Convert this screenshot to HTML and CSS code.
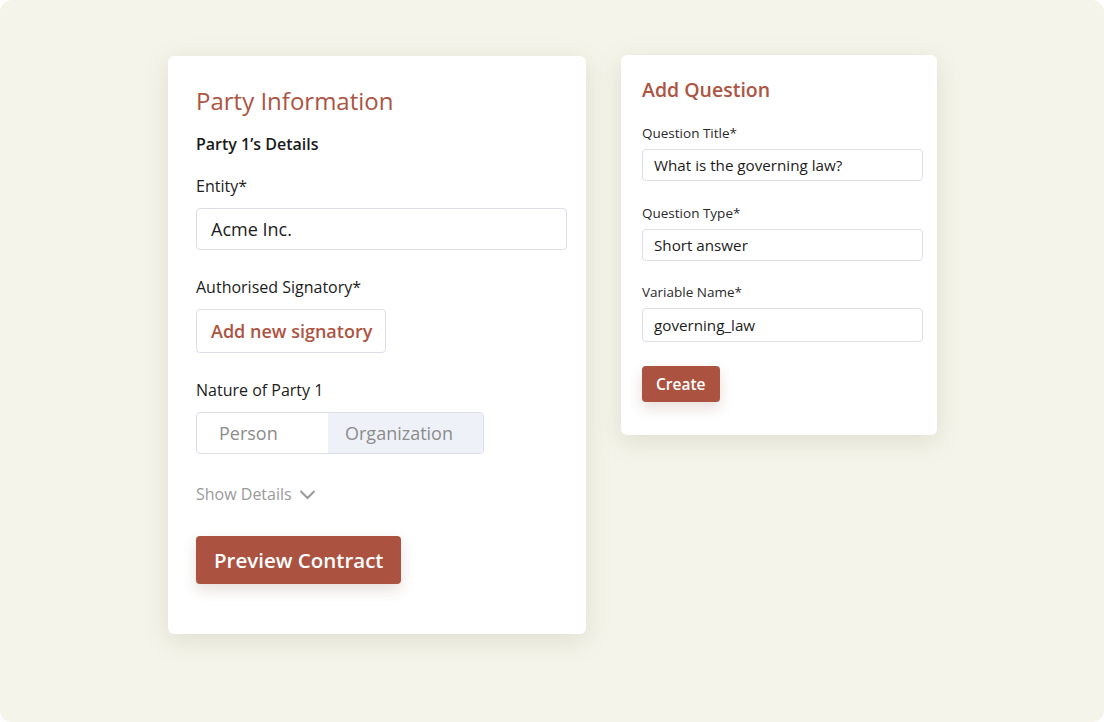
FILE: index.html
```html
<!DOCTYPE html>
<html lang="en">
<head>
    <meta charset="UTF-8">
    <meta name="viewport" content="width=device-width, initial-scale=1.0">
    <link rel="stylesheet" href="styles.css">
    <title>Contract builder</title>
</head>
<body>
    <div class="canvas">

        <div class="card party">
            <h2>Party Information</h2>
            <h4>Party 1’s Details</h4>

            <label class="label">Entity*</label>
            <div class="input big">Acme Inc.</div>

            <label class="label">Authorised Signatory*</label>
            <button class="outline">Add new signatory</button>

            <label class="label">Nature of Party 1</label>
            <div class="toggle">
                <span class="seg person">Person</span>
                <span class="seg org">Organization</span>
            </div>

            <div class="details">
                Show Details
                <svg width="17" height="11" viewBox="0 0 17 11"><path d="M1.5 2 L8.5 9 L15.5 2" fill="none" stroke="#9a9a9a" stroke-width="2"/></svg>
            </div>

            <button class="primary">Preview Contract</button>
        </div>

        <div class="card question">
            <h3>Add Question</h3>

            <label class="small">Question Title*</label>
            <div class="input">What is the governing law?</div>

            <label class="small">Question Type*</label>
            <div class="input">Short answer</div>

            <label class="small">Variable Name*</label>
            <div class="input tall">governing_law</div>

            <button class="primary sm">Create</button>
        </div>

    </div>
</body>
</html>
```

FILE: styles.css
```css
*{
    margin:0;
    box-sizing:border-box;
    font-family:"Open Sans", "Noto Sans", sans-serif;
}
body{
    background:#ffffff;
}
.canvas{
    width:1104px;
    height:722px;
    border-radius:12px;
    background:#f4f4ea;

    display:flex;
    align-items:flex-start;
    gap:35px;
    padding:55px 0 0 168px;
}
.card{
    background:white;
    border-radius:6px;
    box-shadow:0 6px 24px rgba(120, 120, 90, 0.18);
    display:flex;
    flex-direction:column;
    align-items:flex-start;
}
.party{
    margin-top:1px;
    width:418px;
    height:578px;
    padding:28px 19px 0 28px;
}
.question{
    width:316px;
    height:380px;
    padding:22px 14px 0 21px;
}
h2{
    color:#ad5442;
    font-size:24px;
    font-weight:500;
    line-height:34px;
}
h3{
    color:#ad5442;
    font-size:19.5px;
    font-weight:600;
    line-height:26px;
}
h4{
    margin-top:15px;
    font-size:16px;
    font-weight:600;
    color:#1a1a1a;
    line-height:22px;
}
.label{
    font-size:16px;
    color:#1c1c1c;
    line-height:22px;
    margin-top:20px;
}
.party .label + *{
    margin-top:11px;
}
.input{
    width:100%;
    height:32px;
    border:1px solid #dedde9;
    border-radius:4px;
    padding:0 11px;
    display:flex;
    align-items:center;
    font-size:15.2px;
    color:#1c1c1c;
}
.input.big{
    height:42px;
    padding:0 14px;
    font-size:18px;
}
.input.tall{
    height:34px;
}
.small{
    font-size:13.5px;
    color:#2a2a2a;
    line-height:18px;
    margin-top:22px;
    margin-bottom:7px;
}
.question h3 + .small{
    margin-top:21px;
}
.question .input + .small{
    margin-top:23px;
}
.question .input + .small ~ .small{
    margin-top:22px;
}
.party .label:nth-of-type(2){
    margin-top:26px;
}
.party .label:nth-of-type(3){
    margin-top:26px;
}
button{
    cursor:pointer;
    border-radius:4px;
}
.outline{
    height:44px;
    padding:0 13px 0 14px;
    background:white;
    border:1px solid #dedde9;
    color:#ad5442;
    font-size:18px;
    font-weight:600;
}
.toggle{
    display:flex;
    height:42px;
    border:1px solid #dedde9;
    border-radius:4px;
    overflow:hidden;
}
.seg{
    display:flex;
    align-items:center;
    font-size:18px;
    color:#8c8c8c;
}
.person{
    width:131px;
    padding-left:22px;
}
.org{
    width:155px;
    padding-left:17px;
    background:#eef2f8;
}
.details{
    margin-top:29px;
    display:flex;
    align-items:center;
    gap:7px;
    font-size:16px;
    color:#9a9a9a;
    line-height:22px;
}
.primary{
    background:#ab5241;
    color:white;
    border:none;
    font-weight:600;
    box-shadow:0 6px 14px rgba(120, 70, 50, 0.18);
}
.party .primary{
    margin-top:31px;
    height:48px;
    padding:0 18px;
    font-size:20.5px;
}
.primary.sm{
    margin-top:24px;
    height:36px;
    padding:0 14px;
    font-size:15.5px;
}
```
